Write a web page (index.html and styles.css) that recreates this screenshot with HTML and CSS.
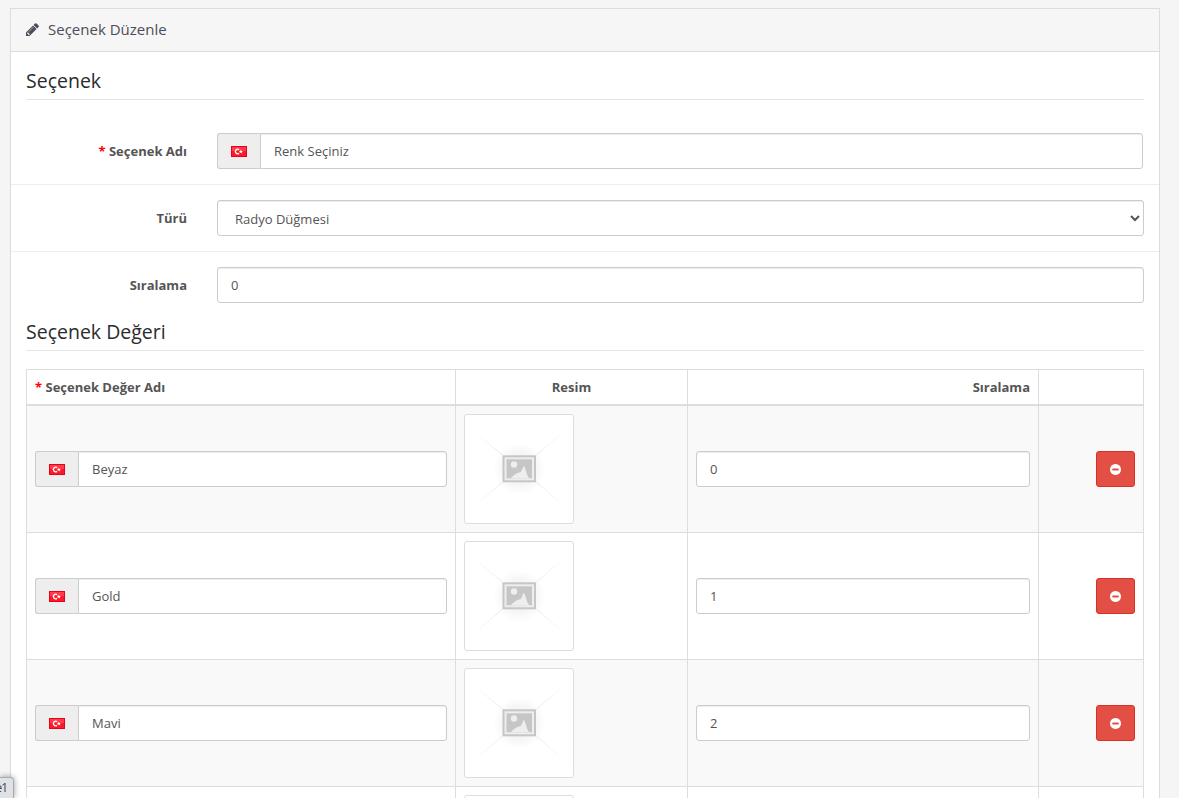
FILE: index.html
```
<!DOCTYPE html>
<html lang="tr">
<head>
  <meta charset="UTF-8" />
  <meta name="viewport" content="width=device-width, initial-scale=1.0" />
  <title>Seçenek Düzenle</title>
  <link rel="stylesheet" href="styles.css">
</head>
<body>
  <svg class="sprite" width="0" height="0">
    <defs>
      <radialGradient id="glow">
        <stop offset="0.4" stop-color="#000" stop-opacity="0.06" />
        <stop offset="1" stop-color="#000" stop-opacity="0" />
      </radialGradient>
      <radialGradient id="rays" gradientUnits="userSpaceOnUse" cx="50.500" cy="50" r="62">
        <stop offset="0.3" stop-color="#d8d8d8" />
        <stop offset="1" stop-color="#fff" />
      </radialGradient>
    </defs>
    <symbol id="flag" viewBox="0 0 16 11">
      <rect width="16" height="11" fill="#e8001c" />
      <rect x="1" y="1" width="14" height="9" fill="#fb1a2c" />
      <rect x="1" y="1" width="14" height="4" fill="#ff3c4c" />
      <path d="M8 3.600A2.300 2.300 0 1 0 8 7.400" fill="none" stroke="#fff" stroke-width="1.300" />
      <path d="M9.800 3.800l.6 1.200 1.500.1-1.100.9.4 1.400-1.400-.8-1.200.7.3-1.300-1-.9 1.300-.1z" fill="#fff" />
    </symbol>
    <symbol id="minus" viewBox="0 0 1536 1536">
      <path fill="#fff" d="M1216 832V704q0-26-19-45t-45-19H384q-26 0-45 19t-19 45v128q0 26 19 45t45 19h768q26 0 45-19t19-45zm320-64q0 209-103 385.500T1153.500 1433 768 1536t-385.500-103T103 1153.500 0 768t103-385.500T382.500 103 768 0t385.500 103T1433 382.500 1536 768z" />
    </symbol>
    <symbol id="no-image" viewBox="0 0 100 100">
      <path d="M3 11L33.500 36M97 11L67.500 36M3 89L33.500 63M97 89L67.500 63" stroke="url(#rays)" stroke-width="0.600" />
      <circle cx="50.500" cy="50" r="26" fill="url(#glow)" />
      <rect x="33.500" y="36.300" width="33.500" height="27" fill="#c6c6c6" />
      <rect x="35.500" y="38.300" width="29.500" height="23" fill="#eee" />
      <rect x="37.500" y="40.300" width="25.500" height="19" fill="#c6c6c6" />
      <circle cx="45" cy="45.500" r="3.200" fill="#eee" />
      <path d="M42 59.300c1-2 4-4 6-5 1.500-.7 3.500-.5 4-1.500l2.800-6c1 1 1.700 4 2.700 7 .7 2.500 1.500 4.500 3 5.500z" fill="#eee" />
    </symbol>
  </svg>

  <div class="panel">
    <div class="panel-heading">
      <svg class="pencil" viewBox="0 0 1536 1536"><path fill="currentColor" d="M363 1408l91-91-235-235-91 91v107h128v128h107zM886 480q0-22-22-22-10 0-17 7l-542 542q-7 7-7 17 0 22 22 22 10 0 17-7l542-542q7-7 7-17zm-54-192l416 416-832 832H0v-416zm683 96q0 53-37 90l-166 166-416-416 166-165q36-38 90-38 53 0 91 38l235 234q37 39 37 91z" /></svg>
      <h3>Seçenek Düzenle</h3>
    </div>
    <div class="panel-body">
      <h2 class="legend">Seçenek</h2>
      <div class="form-group">
        <label class="required">Seçenek Adı</label>
        <div class="input-group first">
          <span class="addon"><svg class="flag"><use href="#flag" /></svg></span>
          <input type="text" class="form-control" value="Renk Seçiniz" />
        </div>
      </div>
      <div class="form-group">
        <label>Türü</label>
        <select class="form-control">
          <option>Radyo Düğmesi</option>
        </select>
      </div>
      <div class="form-group">
        <label>Sıralama</label>
        <input type="text" class="form-control" value="0" />
      </div>

      <h2 class="legend">Seçenek Değeri</h2>
      <table class="table">
        <colgroup>
          <col class="col-name"><col class="col-image"><col class="col-sort"><col class="col-action">
        </colgroup>
        <thead>
          <tr>
            <th class="left required">Seçenek Değer Adı</th>
            <th>Resim</th>
            <th class="right">Sıralama</th>
            <th></th>
          </tr>
        </thead>
        <tbody id="option-values"></tbody>
      </table>
    </div>
  </div>
  <div class="status">e1</div>

  <script>
    const values = ["Beyaz", "Gold", "Mavi", "Siyah"];
    const tbody = document.getElementById("option-values");

    values.forEach((name, index) => {
      const row = document.createElement("tr");
      row.innerHTML = `
        <td>
          <div class="input-group">
            <span class="addon"><svg class="flag"><use href="#flag" /></svg></span>
            <input type="text" class="form-control" value="${name}" />
          </div>
        </td>
        <td><a class="thumbnail"><svg><use href="#no-image" /></svg></a></td>
        <td><input type="text" class="form-control" value="${index}" /></td>
        <td class="right"><button type="button" class="btn-danger"><svg><use href="#minus" /></svg></button></td>
      `;
      tbody.appendChild(row);
    });
  </script>
</body>
</html>
```

FILE: styles.css
```
* {
  box-sizing: border-box;
}
body {
  margin: 0;
  padding: 8px 19px 0 10px;
  height: 798px;
  overflow: hidden;
  font-family: "Open Sans", sans-serif;
  font-size: 13px;
  line-height: 18px;
  color: #555;
  background-color: #f5f5f5;
}
.sprite {
  position: absolute;
}
.panel {
  background-color: #fff;
  border: 1px solid #dcdcdc;
}
.panel-heading {
  display: flex;
  align-items: center;
  gap: 9px;
  height: 43px;
  padding: 0 15px;
  color: #4c4d5a;
  background-color: #f6f6f6;
  border-bottom: 1px solid #dcdcdc;
}
.panel-heading h3 {
  margin: 0;
  padding-bottom: 2px;
  font-size: 15px;
  font-weight: 400;
}
.pencil {
  width: 13px;
  height: 13px;
  margin-bottom: 1px;
}
.panel-body {
  padding: 15px;
}
.legend {
  height: 33px;
  margin: 0 0 18px;
  font-size: 19.5px;
  font-weight: 400;
  line-height: 27px;
  color: #2c2c2c;
  border-bottom: 1px solid #e5e5e5;
}
.form-group {
  display: flex;
  align-items: center;
  margin: 0 -15px;
  padding: 15px;
}
.form-group + .form-group {
  border-top: 1px solid #ededed;
}
.form-group label {
  flex: 0 0 161px;
  margin-right: 30px;
  text-align: right;
  font-weight: 700;
}
.required::before {
  content: "* ";
  color: #f00;
}
.form-control {
  flex: 1;
  width: 100%;
  min-width: 0;
  height: 36px;
  padding: 8px 13px;
  font-family: inherit;
  font-size: 13px;
  color: #555;
  background-color: #fff;
  border: 1px solid #ccc;
  border-radius: 3px;
  box-shadow: inset 0 1px 1px rgba(0, 0, 0, 0.075);
}
.input-group {
  display: flex;
  flex: 1;
}
.input-group.first {
  margin-right: 1px;
}
.input-group .form-control {
  border-radius: 0 3px 3px 0;
}
.addon {
  display: flex;
  align-items: center;
  justify-content: center;
  width: 43px;
  background-color: #eee;
  border: 1px solid #ccc;
  border-right: none;
  border-radius: 3px 0 0 3px;
}
.flag {
  width: 16px;
  height: 11px;
}
.table {
  width: 100%;
  table-layout: fixed;
  border-collapse: separate;
  border-spacing: 0;
  border-top: 1px solid #ddd;
  border-left: 1px solid #ddd;
}
.col-name {
  width: 429px;
}
.col-image {
  width: 232px;
}
.col-sort {
  width: 351px;
}
.col-action {
  width: 105px;
}
.table th {
  height: 36px;
  padding: 0 8px;
  border-right: 1px solid #ddd;
  border-bottom: 2px solid #ddd;
}
.table td {
  padding: 8px;
  border-right: 1px solid #ddd;
  border-bottom: 1px solid #ddd;
}
.table tbody tr:nth-child(odd) {
  background-color: #f9f9f9;
}
.table .left {
  text-align: left;
}
.table .right {
  text-align: right;
}
.thumbnail {
  display: block;
  width: 110px;
  height: 110px;
  padding: 4px;
  background-color: #fff;
  border: 1px solid #ddd;
  border-radius: 3px;
}
.thumbnail svg {
  display: block;
  width: 100px;
  height: 100px;
}
.btn-danger {
  width: 39px;
  height: 36px;
  padding: 0;
  vertical-align: middle;
  background-color: #e34f44;
  border: 1px solid #dc2f26;
  border-radius: 3px;
}
.btn-danger svg {
  width: 11px;
  height: 11px;
  vertical-align: middle;
}
.status {
  position: fixed;
  left: 0;
  bottom: 0;
  display: flex;
  justify-content: flex-end;
  width: 14px;
  height: 21px;
  padding-right: 6px;
  overflow: hidden;
  font-size: 12px;
  line-height: 20px;
  letter-spacing: -1px;
  color: #3c4254;
  background-color: #dee1e6;
  border: 1px solid #aaa;
  border-width: 1px 1px 0 0;
  border-radius: 0 4px 0 0;
  box-shadow: 0 0 6px rgba(0, 0, 0, 0.4);
}
```
